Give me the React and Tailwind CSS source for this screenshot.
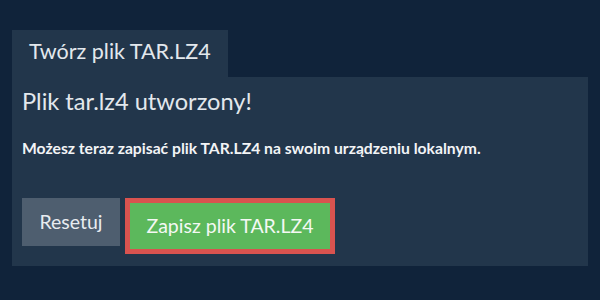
export default function App() {
  return (
    <div className="w-[600px] h-[300px] bg-[#10233a] px-3 pt-[30px] font-['Lato','Open_Sans',sans-serif] text-white overflow-hidden">
      <div className="flex">
        <div className="w-[216px] h-[47px] bg-[#22364b] pl-[17px] pt-[5px] text-[21.5px] leading-[32px] text-[#e3e8ed]">
          Twórz plik TAR.LZ4
        </div>
      </div>
      <div className="bg-[#22364b] h-[189px] pl-[10px] pt-[8px]">
        <h1 className="text-[23.6px] leading-[32px] text-[#e3e8ed]">Plik tar.lz4 utworzony!</h1>
        <p className="mt-[21px] text-[15.7px] leading-[20px] font-bold text-[#f2f4f6]">
          Możesz teraz zapisać plik TAR.LZ4 na swoim urządzeniu lokalnym.
        </p>
        <div className="mt-[40px] flex items-start gap-[5px]">
          <button className="h-[48px] w-[98px] bg-[#4e5e6f] text-[19.5px] text-[#e8ecf0]">Resetuj</button>
          <button className="h-[56px] w-[210px] border-[5px] border-[#d9534f] bg-[#5cb85c] text-[19.5px] text-[#f4f8f4]">
            Zapisz plik TAR.LZ4
          </button>
        </div>
      </div>
    </div>
  );
}
